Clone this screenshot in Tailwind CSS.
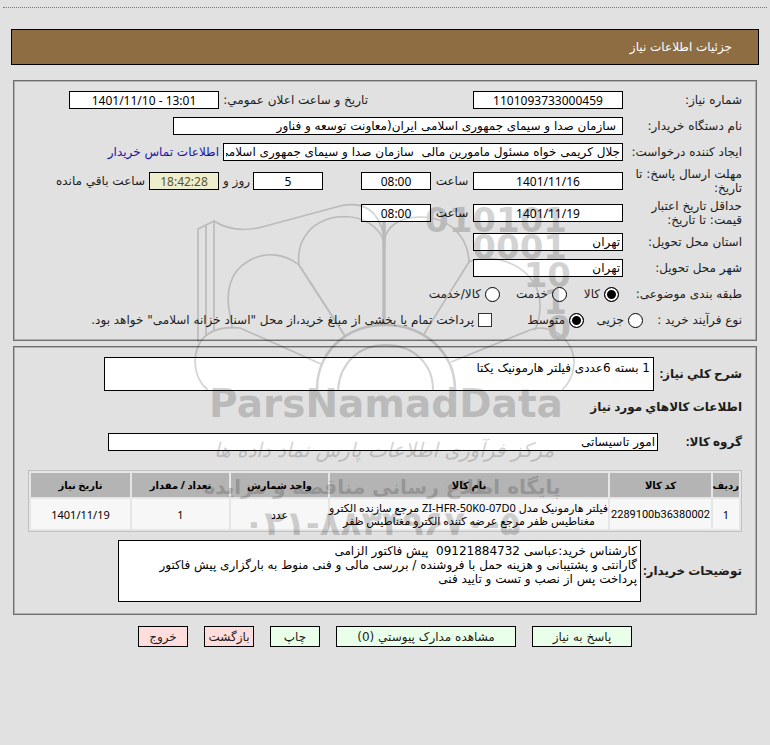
<!DOCTYPE html>
<html lang="fa" dir="rtl">
  <head>
    <meta charset="utf-8" />
    <title>جزئیات اطلاعات نیاز</title>
    <script src="https://cdn.jsdelivr.net/npm/@tailwindcss/browser@4"></script>
  </head>
  <body
    class="relative min-h-screen bg-[#e1e1e1] font-['DejaVu_Sans',sans-serif] text-[12px] leading-[14px] text-[#1c1c1c]"
  >
    <div class="mx-[3px] h-2 border-b border-dotted border-[#777]"></div>

    <header
      class="mx-[11px] mt-[21px] flex h-9 items-center border border-black bg-[#8e6d42] px-[26px] text-white"
    >
      <h1>جزئیات اطلاعات نیاز</h1>
    </header>

    <main class="mx-[13px] mt-[15px]">
      <!-- need details -->
      <section class="border border-[#6e6e6e] px-[14px] pt-[6px] pb-[7px] inset-ring inset-ring-[#b0b0b0]">
        <div class="flex h-[26px] items-center whitespace-nowrap">
          <label for="need-no" class="w-[119px] shrink-0">شماره نیاز:</label>
          <input
            id="need-no"
            class="h-[18px] w-[150px] border border-black bg-white text-center font-['Noto_Sans',sans-serif] text-black"
            value="1101093733000459"
            readonly
          />
          <label for="announce" class="ms-[105px] w-[149px]">تاریخ و ساعت اعلان عمومي:</label>
          <input
            id="announce"
            dir="ltr"
            class="h-[18px] w-[150px] border border-black bg-white text-center font-['Noto_Sans',sans-serif] text-black"
            value="1401/11/10 - 13:01"
            readonly
          />
        </div>
        <div class="flex h-[26px] items-center whitespace-nowrap">
          <label for="org" class="w-[119px] shrink-0">نام دستگاه خریدار:</label>
          <input
            id="org"
            class="h-[18px] w-[450px] border border-black bg-white px-[6px] text-black"
            value="سازمان صدا و سیمای جمهوری اسلامی ایران(معاونت توسعه و فناور"
            readonly
          />
        </div>
        <div class="flex h-[26px] items-center whitespace-nowrap">
          <label for="creator" class="w-[119px] shrink-0">ایجاد کننده درخواست:</label>
          <input
            id="creator"
            class="h-[18px] w-[400px] border border-black bg-white px-[2px] text-black"
            value="جلال کریمی خواه مسئول مامورین مالی  سازمان صدا و سیمای جمهوری اسلامی ایران"
            readonly
          />
          <a href="#" class="ms-1 text-[#1a12a8]">اطلاعات تماس خریدار</a>
        </div>
        <div class="flex h-8 items-center whitespace-nowrap">
          <label for="reply-date" class="w-[119px] shrink-0">مهلت ارسال پاسخ: تا<br />تاریخ:</label>
          <input
            id="reply-date"
            class="h-[18px] w-[150px] border border-black bg-white text-center font-['Noto_Sans',sans-serif] text-black"
            value="1401/11/16"
            readonly
          />
          <label for="reply-time" class="w-[42px] text-center">ساعت</label>
          <input
            id="reply-time"
            class="h-[18px] w-[70px] border border-black bg-white text-center font-['Noto_Sans',sans-serif] text-black"
            value="08:00"
            readonly
          />
          <input
            id="days"
            class="ms-[38px] h-[18px] w-[70px] border border-black bg-white text-center font-['Noto_Sans',sans-serif] text-black"
            value="5"
            readonly
          />
          <label for="days" class="w-[34px] ps-[3px]">روز و</label>
          <input
            id="remain"
            class="h-[18px] w-[70px] border border-black bg-[#eeeecc] text-center font-['Noto_Sans',sans-serif] text-[#555533]"
            value="18:42:28"
            readonly
          />
          <label for="remain" class="ps-1">ساعت باقي مانده</label>
        </div>
        <div class="flex h-8 items-center whitespace-nowrap">
          <label for="valid-date" class="w-[119px] shrink-0">حداقل تاریخ اعتبار<br />قیمت: تا تاریخ:</label>
          <input
            id="valid-date"
            class="h-[18px] w-[150px] border border-black bg-white text-center font-['Noto_Sans',sans-serif] text-black"
            value="1401/11/19"
            readonly
          />
          <label for="valid-time" class="w-[42px] text-center">ساعت</label>
          <input
            id="valid-time"
            class="h-[18px] w-[70px] border border-black bg-white text-center font-['Noto_Sans',sans-serif] text-black"
            value="08:00"
            readonly
          />
        </div>
        <div class="flex h-[26px] items-center whitespace-nowrap">
          <label for="province" class="w-[119px] shrink-0">استان محل تحویل:</label>
          <input
            id="province"
            class="h-[18px] w-[150px] border border-black bg-white px-[2px] text-black"
            value="تهران"
            readonly
          />
        </div>
        <div class="flex h-[26px] items-center whitespace-nowrap">
          <label for="city" class="w-[119px] shrink-0">شهر محل تحویل:</label>
          <input
            id="city"
            class="h-[18px] w-[150px] border border-black bg-white px-[2px] text-black"
            value="تهران"
            readonly
          />
        </div>
        <div class="flex h-[26px] items-center whitespace-nowrap">
          <span class="w-[123px] shrink-0">طبقه بندی موضوعی:</span>
          <label class="flex w-[52px] items-center gap-1">
            <input type="radio" name="kind" checked class="size-[15px] shrink-0 appearance-none rounded-full border border-black bg-white checked:bg-black checked:inset-ring-2 checked:inset-ring-white" />کالا
          </label>
          <label class="flex w-[67px] items-center gap-1">
            <input type="radio" name="kind" class="size-[15px] shrink-0 appearance-none rounded-full border border-black bg-white checked:bg-black checked:inset-ring-2 checked:inset-ring-white" />خدمت
          </label>
          <label class="flex items-center gap-1">
            <input type="radio" name="kind" class="size-[15px] shrink-0 appearance-none rounded-full border border-black bg-white checked:bg-black checked:inset-ring-2 checked:inset-ring-white" />کالا/خدمت
          </label>
        </div>
        <div class="flex h-[26px] items-center whitespace-nowrap">
          <span class="w-[99px] shrink-0">نوع فرآیند خرید :</span>
          <label class="flex w-[59px] items-center gap-1">
            <input type="radio" name="process" class="size-[15px] shrink-0 appearance-none rounded-full border border-black bg-white checked:bg-black checked:inset-ring-2 checked:inset-ring-white" />جزیی
          </label>
          <label class="flex w-[92px] items-center gap-1">
            <input type="radio" name="process" checked class="size-[15px] shrink-0 appearance-none rounded-full border border-black bg-white checked:bg-black checked:inset-ring-2 checked:inset-ring-white" />متوسط
          </label>
          <label class="flex items-center gap-1">
            <input type="checkbox" class="size-[14px] shrink-0 appearance-none border border-[#333] bg-white checked:bg-black" />پرداخت تمام یا بخشی از مبلغ خرید،از محل "اسناد خزانه اسلامی" خواهد بود.
          </label>
        </div>
      </section>

      <!-- goods -->
      <section class="mt-[5px] border border-[#6e6e6e] px-[14px] pt-[10px] pb-[12px] inset-ring inset-ring-[#b0b0b0]">
        <div class="flex items-center whitespace-nowrap">
          <label for="summary" class="w-[88px] shrink-0 font-['Noto_Sans','DejaVu_Sans',sans-serif] font-bold">شرح كلي نياز:</label>
          <textarea
            id="summary"
            class="h-[34px] w-[550px] resize-none overflow-hidden border border-black bg-white px-[3px] pt-[3px] text-black"
            readonly
          >1 بسته 6عددی فیلتر هارمونیک یکتا</textarea>
        </div>
        <h2 class="mt-[9px] font-['Noto_Sans','DejaVu_Sans',sans-serif] font-bold">اطلاعات كالاهاي مورد نياز</h2>
        <div class="mt-[19px] flex items-center whitespace-nowrap">
          <label for="group" class="w-[84px] shrink-0 font-['Noto_Sans','DejaVu_Sans',sans-serif] font-bold">گروه کالا:</label>
          <input
            id="group"
            class="h-[18px] w-[550px] border border-black bg-white px-[2px] text-black"
            value="امور تاسیساتی"
            readonly
          />
        </div>

        <table
          class="mt-[19px] w-full table-fixed border-separate border-spacing-[2px] border border-[#c0c0c0] bg-[#e6e6e6] text-center font-['Noto_Sans','DejaVu_Sans',sans-serif] text-[11px] leading-[13px] whitespace-nowrap text-black"
        >
          <thead>
            <tr class="h-6 bg-[#b4b4b4] text-[10px]">
              <th class="w-[26px]">ردیف</th>
              <th class="w-[101px]">کد کالا</th>
              <th>نام کالا</th>
              <th class="w-[97px]">واحد شمارش</th>
              <th class="w-[97px]">تعداد / مقدار</th>
              <th class="w-[99px]">تاریخ نیاز</th>
            </tr>
          </thead>
          <tbody>
            <tr class="h-[30px] bg-[#f7f7f7]">
              <td>1</td>
              <td class="font-['Roboto',sans-serif]">2289100b36380002</td>
              <td>
                فیلتر هارمونیک مدل ZI-HFR-50K0-07D0 مرجع سازنده الکترو<br />
                مغناطیس ظفر مرجع عرضه کننده الکترو مغناطیس ظفر
              </td>
              <td>عدد</td>
              <td>1</td>
              <td>1401/11/19</td>
            </tr>
          </tbody>
        </table>

        <div class="mt-2 flex items-center whitespace-nowrap">
          <label for="notes" class="w-[101px] shrink-0 font-['Noto_Sans','DejaVu_Sans',sans-serif] font-bold">توضیحات خریدار:</label>
          <textarea
            id="notes"
            class="h-[62px] w-[523px] resize-none overflow-hidden border border-black bg-white px-[3px] pt-[3px] whitespace-pre text-black"
            readonly
          >کارشناس خرید:عباسی 09121884732  پیش فاکتور الزامی
گارانتی و پشتیبانی و هزینه حمل با فروشنده / بررسی مالی و فنی منوط به بارگزاری پیش فاکتور
پرداخت پس از نصب و تست و تایید فنی</textarea>
        </div>
      </section>

      <div class="mt-[11px] flex justify-center gap-4 whitespace-nowrap">
        <button class="h-[21px] w-[100px] border border-black bg-[#eaffea]">پاسخ به نیاز</button>
        <button class="h-[21px] w-[180px] border border-black bg-[#eaffea]">مشاهده مدارک پیوستي (0)</button>
        <button class="h-[21px] w-[50px] border border-black bg-[#eaffea]">چاپ</button>
        <button class="h-[21px] w-[50px] border border-black bg-[#ffdddd]">بازگشت</button>
        <button class="h-[21px] w-[50px] border border-black bg-[#ffdddd]">خروج</button>
      </div>
    </main>

    <!-- watermark -->
    <svg
      class="pointer-events-none absolute top-[195px] left-1/2 h-[355px] w-[390px] -translate-x-1/2 opacity-[0.17]"
      viewBox="190 195 390 355"
      direction="ltr"
      fill="#000"
    >
      <g fill="none" stroke="#000" stroke-width="1.6">
        <path d="M198 342V229L214 221V331M206 336V225" />
        <path d="M214 221Q234 234 262 227L340 206Q376 198 384 236" />
        <path d="M299 265C296 240 312 217 345 216.500C365 217 380 228 384 242" />
        <path d="M299 265C284 253 264 251 247 262C230 272 225 292 230 315L232 327" />
        <path d="M299 265L345 336" stroke-width="2" />
        <path d="M384 222V325" stroke-width="3.500" />
        <path d="M384 242C386 226 400 217 420 217C448 217 468 235 469 262" />
        <path d="M469 262L424 334M469 262C495 250 540 268 540 305Q540 320 535 330" />
        <path d="M317 390C317 352 346 325 385 325C424 325 455 352 455 390" stroke-width="2.500" />
        <path d="M338 390C340 362 360 345 385 345C414 345 433 364 433 390" stroke-width="2" />
        <path d="M321 364L240 328C218 326 196 332 195 362Q196 381 208 390" />
        <path d="M451 362L530 330C550 322 575 340 574 364Q573 380 562 390" />
      </g>
      <g font-family="DejaVu Sans" font-weight="700">
        <g font-size="34" text-anchor="end">
          <text x="567" y="232">010101</text>
          <text x="567" y="259">0001</text>
          <text x="571" y="287">10</text>
          <text x="567" y="314">1</text>
          <text x="571" y="340">0</text>
        </g>
        <g text-anchor="middle">
          <text x="386" y="417" font-size="39">ParsNamadData</text>
          <text x="384" y="457" font-size="20" font-weight="400" font-style="italic">مرکز فرآوری اطلاعات پارس نماد داده ها</text>
          <text x="382" y="494" font-size="20">پایگاه اطلاع رسانی مناقصه و مزایده</text>
          <text x="382" y="535" font-size="34">۰۲۱-۸۸۳۴۹۶۷۰-۵</text>
        </g>
      </g>
    </svg>
  </body>
</html>
